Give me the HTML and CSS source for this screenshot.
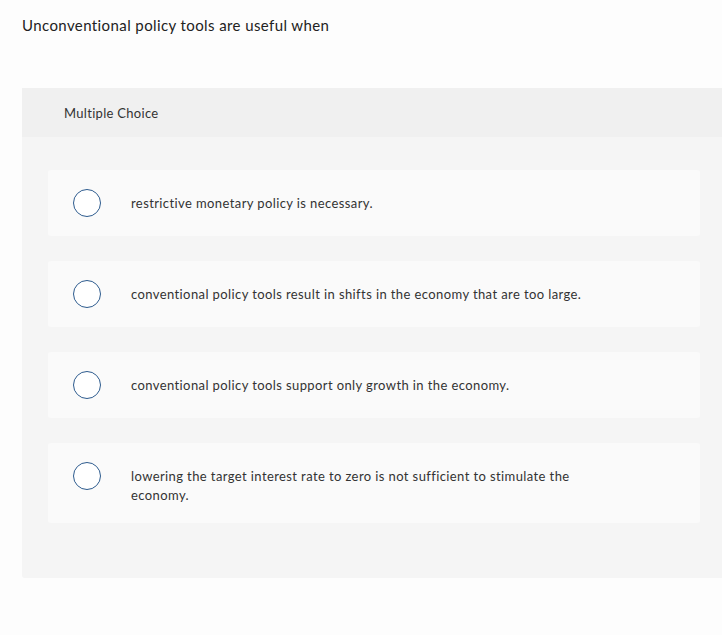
FILE: index.html
```html
<!DOCTYPE html>
<html>
<head>
<meta charset="utf-8">
<link rel="stylesheet" href="styles.css">
</head>
<body>
<div class="question">Unconventional policy tools are useful when</div>
<div class="panel">
  <div class="panel-head">Multiple Choice</div>
  <div class="options">
    <div class="option"><span class="radio"></span><span class="label">restrictive monetary policy is necessary.</span></div>
    <div class="option"><span class="radio"></span><span class="label">conventional policy tools result in shifts in the economy that are too large.</span></div>
    <div class="option"><span class="radio"></span><span class="label">conventional policy tools support only growth in the economy.</span></div>
    <div class="option tall"><span class="radio"></span><span class="label">lowering the target interest rate to zero is not sufficient to stimulate the economy.</span></div>
  </div>
</div>
</body>
</html>
```
FILE: styles.css
```css
html, body {
  margin: 0;
  padding: 0;
  background: #fdfdfd;
  font-family: Lato, "Open Sans", sans-serif;
  color: #333;
}
.question {
  padding: 16px 0 0 22px;
  font-size: 15px;
  line-height: 18px;
  letter-spacing: 0.4px;
  color: #222;
  height: 88px;
  box-sizing: border-box;
}
.panel {
  margin-left: 22px;
  background: #f5f5f5;
  border-bottom-left-radius: 3px;
  height: 490px;
  box-sizing: border-box;
}
.panel-head {
  height: 49px;
  background: #f0f0f0;
  padding-left: 42px;
  display: flex;
  align-items: center;
  font-size: 13px;
  letter-spacing: 0.3px;
  color: #333;
}
.options {
  padding: 33px 22px 0 26px;
  display: flex;
  flex-direction: column;
  gap: 25px;
}
.option {
  background: #fafafa;
  border-radius: 3px;
  height: 66px;
  display: flex;
  align-items: flex-start;
  padding: 19px 0 0 25px;
  box-sizing: border-box;
}
.option.tall {
  height: 80px;
}
.radio {
  width: 28px;
  height: 28px;
  box-sizing: border-box;
  border: 1.5px solid #2d5b8e;
  border-radius: 50%;
  background: #fff;
  flex: none;
}
.label {
  margin: 5px 0 0 30px;
  font-size: 13px;
  line-height: 19px;
  letter-spacing: 0.4px;
  color: #333;
  max-width: 470px;
}
```
